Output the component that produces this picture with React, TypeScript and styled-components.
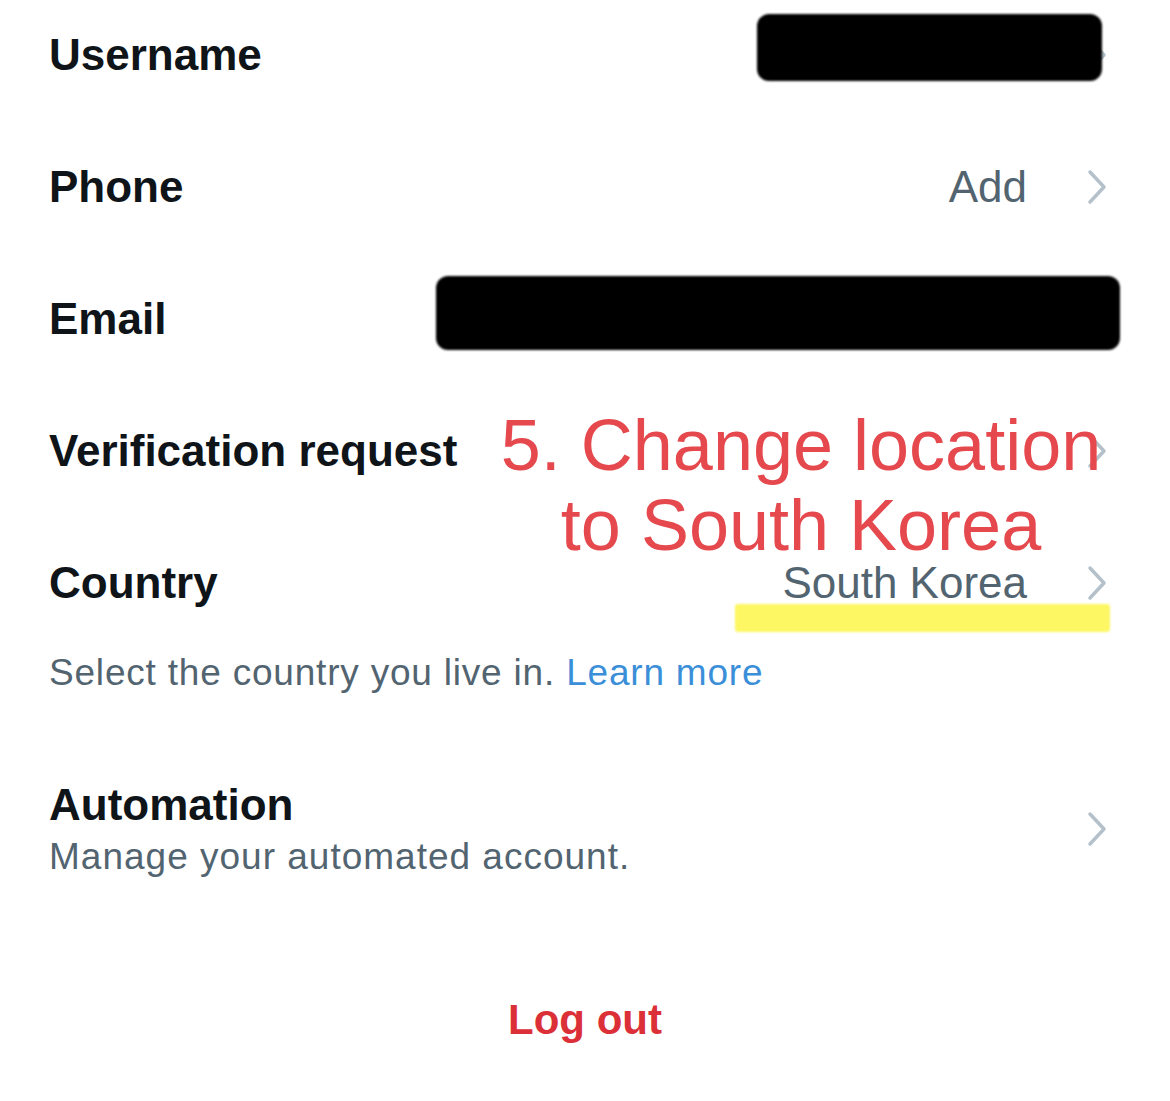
import React from "react";
import styled, { createGlobalStyle } from "styled-components";

const GlobalStyle = createGlobalStyle`
    html, body {
        margin: 0;
        padding: 0;
        background: #ffffff;
    }
    body {
        font-family: "Liberation Sans", Arial, sans-serif;
    }
`;

// STYLES
const Page = styled.div`
    position: relative;
    width: 1170px;
    height: 1101px;
    overflow: hidden;
    background: #ffffff;
`;

const List = styled.div`
    display: flex;
    flex-direction: column;
    gap: 22px;
`;

const Row = styled.div`
    position: relative;
    display: flex;
    align-items: center;
    justify-content: space-between;
    height: 110px;
    padding: 0 63px 0 49px;
`;

const Label = styled.div`
    font-size: 44px;
    font-weight: 700;
    color: #0f1419;
    line-height: 52px;
`;

const Trailing = styled.div`
    display: flex;
    align-items: center;
    gap: 60px;
`;

const Value = styled.span`
    font-size: 44px;
    color: #536471;
    line-height: 36px;
`;

const Redaction = styled.div<{ $left: number; $top: number; $width: number; $height: number }>`
    position: absolute;
    left: ${(p) => p.$left}px;
    top: ${(p) => p.$top}px;
    width: ${(p) => p.$width}px;
    height: ${(p) => p.$height}px;
    background: #000000;
    border-radius: 12px;
    filter: blur(0.8px);
`;

const Hint = styled.p`
    margin: 13px 0 0;
    padding: 0 49px;
    font-size: 37px;
    line-height: 44px;
    letter-spacing: 0.8px;
    color: #536471;
`;

const Link = styled.a`
    color: #3b8fd9;
    text-decoration: none;
`;

const AutomationRow = styled.div`
    display: flex;
    align-items: center;
    justify-content: space-between;
    margin-top: 84px;
    padding: 0 63px 0 49px;
`;

const Stack = styled.div`
    display: flex;
    flex-direction: column;
`;

const Sub = styled.div`
    margin-top: 4px;
    font-size: 37px;
    line-height: 44px;
    letter-spacing: 1px;
    color: #536471;
`;

const LogOut = styled.div`
    margin-top: 115px;
    text-align: center;
    font-size: 42px;
    line-height: 52px;
    font-weight: 700;
    color: #dc3039;
`;

const Annotation = styled.div`
    position: absolute;
    left: 441px;
    top: 413px;
    width: 720px;
    display: flex;
    flex-direction: column;
    align-items: center;
    gap: 16px;
    color: #e5484d;
`;

const AnnotationLine = styled.span`
    font-size: 72px;
    line-height: 64px;
    white-space: nowrap;
`;

const Highlight = styled.div`
    position: absolute;
    left: 735px;
    top: 604px;
    width: 375px;
    height: 28px;
    background: #fcf75a;
    border-radius: 3px;
    filter: blur(1px);
    opacity: 0.95;
`;

const Chevron = () => (
    <svg width="20" height="36" viewBox="0 0 20 36" fill="none">
        <polyline
            points="3,3 17,18 3,33"
            stroke="#b4c1ca"
            strokeWidth="3.5"
            strokeLinecap="round"
            strokeLinejoin="round"
        />
    </svg>
);

type Item = {
    label: string;
    value?: string;
    redact?: { left: number; top: number; width: number; height: number };
};

const items: Item[] = [
    { label: "Username", value: "@user", redact: { left: 757, top: 14, width: 345, height: 67 } },
    { label: "Phone", value: "Add" },
    { label: "Email", value: "mail@example.com", redact: { left: 436, top: 12, width: 684, height: 74 } },
    { label: "Verification request" },
    { label: "Country", value: "South Korea" },
];

// COMPONENT
const App: React.FC = () => {
    return (
        <Page>
            <GlobalStyle />
            <List>
                {items.map((item) => (
                    <Row key={item.label}>
                        <Label>{item.label}</Label>
                        <Trailing>
                            {item.value && <Value>{item.value}</Value>}
                            <Chevron />
                        </Trailing>
                        {item.redact && (
                            <Redaction
                                $left={item.redact.left}
                                $top={item.redact.top}
                                $width={item.redact.width}
                                $height={item.redact.height}
                            />
                        )}
                    </Row>
                ))}
            </List>

            <Hint>
                Select the country you live in. <Link href="#">Learn more</Link>
            </Hint>

            <AutomationRow>
                <Stack>
                    <Label>Automation</Label>
                    <Sub>Manage your automated account.</Sub>
                </Stack>
                <Chevron />
            </AutomationRow>

            <LogOut>Log out</LogOut>

            <Highlight />
            <Annotation>
                <AnnotationLine>5. Change location</AnnotationLine>
                <AnnotationLine>to South Korea</AnnotationLine>
            </Annotation>
        </Page>
    );
};

export default App;
